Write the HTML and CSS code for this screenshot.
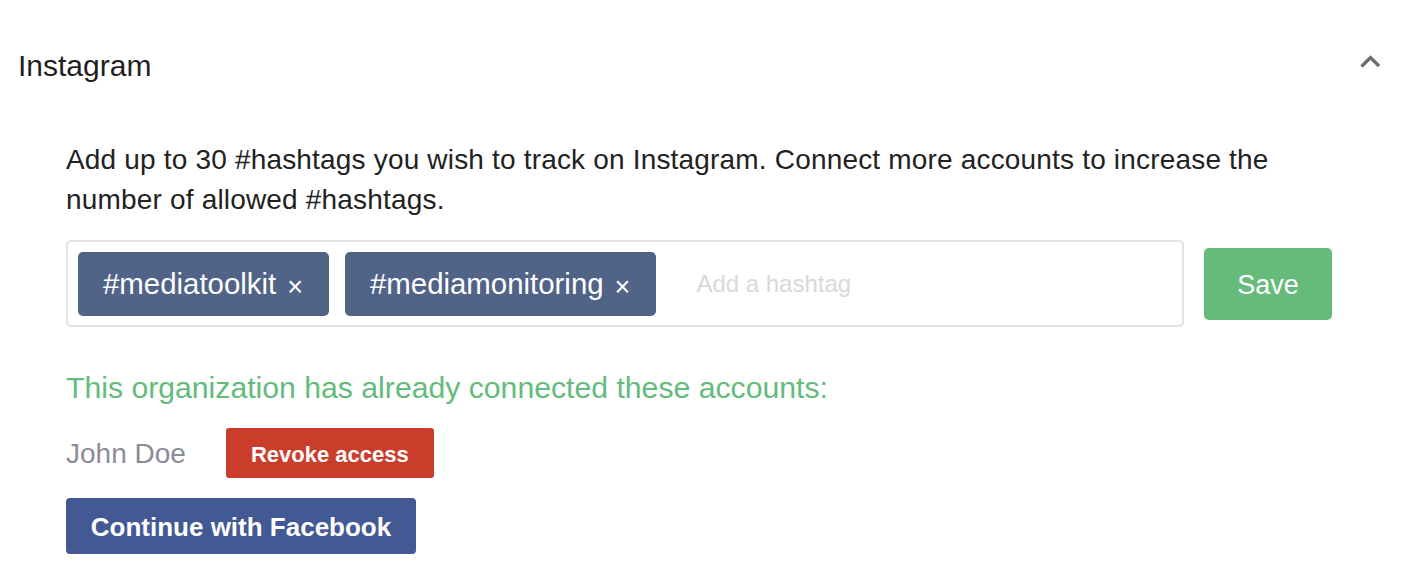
FILE: index.html
```html
<!DOCTYPE html>
<html>
<head>
<meta charset="utf-8">
<link rel="stylesheet" href="styles.css">
</head>
<body>
<section class="panel">
  <header class="panel-head">
    <h2 class="panel-title">Instagram</h2>
    <svg class="chevron" width="24" height="14" viewBox="0 0 24 14"><path d="M2.5 11.5 L11.5 2.5 L20 11" fill="none" stroke="#6b6b6b" stroke-width="3.2"/></svg>
  </header>
  <div class="panel-body">
    <p class="intro">Add up to 30 #hashtags you wish to track on Instagram. Connect more accounts to increase the number of allowed #hashtags.</p>
    <div class="tag-row">
      <div class="tag-input">
        <span class="tag">#mediatoolkit<span class="tag-x">×</span></span>
        <span class="tag">#mediamonitoring<span class="tag-x">×</span></span>
        <span class="placeholder">Add a hashtag</span>
      </div>
      <button class="btn-save">Save</button>
    </div>
    <p class="connected">This organization has already connected these accounts:</p>
    <div class="account">
      <span class="account-name">John Doe</span>
      <button class="btn-revoke">Revoke access</button>
    </div>
    <button class="btn-fb">Continue with Facebook</button>
  </div>
</section>
</body>
</html>
```
FILE: styles.css
```css
html, body {
  margin: 0;
  padding: 0;
  background: #ffffff;
}
body {
  font-family: "Liberation Sans", Arial, sans-serif;
  color: #222222;
}
.panel {
  width: 1406px;
  height: 586px;
  box-sizing: border-box;
}
.panel-head {
  display: flex;
  align-items: center;
  justify-content: space-between;
  padding: 46px 23px 0 18px;
  height: 40px;
}
.panel-title {
  margin: 0;
  font-weight: normal;
  font-size: 30px;
  line-height: 40px;
  color: #1f1f1f;
}
.chevron {
  display: block;
  margin-top: -9px;
}
.panel-body {
  padding: 0 0 0 66px;
}
.intro {
  margin: 54px 0 0 0;
  width: 1266px;
  font-size: 28px;
  line-height: 40px;
  letter-spacing: 0.18px;
  color: #222222;
}
.tag-row {
  display: flex;
  align-items: center;
  margin-top: 20px;
}
.tag-input {
  width: 1118px;
  height: 87px;
  box-sizing: border-box;
  border: 2px solid #e2e2e2;
  border-radius: 5px;
  padding: 10px 10px 9px 10px;
  display: flex;
  align-items: center;
  gap: 16px;
}
.tag {
  display: flex;
  align-items: center;
  height: 64px;
  box-sizing: border-box;
  padding: 0 26px 0 25px;
  background: #516387;
  border-radius: 5px;
  color: #ffffff;
  font-size: 29.4px;
  white-space: nowrap;
}
.tag-x {
  font-size: 27px;
  margin-left: 11px;
  margin-top: 7px;
}
.placeholder {
  margin-left: 24px;
  font-size: 24px;
  color: #d9d9d9;
}
.btn-save {
  margin-left: 20px;
  width: 128px;
  height: 72px;
  border: none;
  border-radius: 5px;
  background: #66bb7b;
  color: #ffffff;
  font-family: "Liberation Sans", Arial, sans-serif;
  font-size: 27px;
  padding: 4px 0 0 0;
}
.connected {
  margin: 41px 0 0 0;
  font-size: 30.2px;
  line-height: 40px;
  color: #63bb7c;
}
.account {
  display: flex;
  align-items: center;
  margin-top: 20px;
  height: 50px;
}
.account-name {
  font-size: 28px;
  color: #8a8c96;
  padding-top: 2px;
}
.btn-revoke {
  margin-left: 40px;
  width: 208px;
  height: 50px;
  border: none;
  border-radius: 3px;
  background: #cb3d2b;
  color: #ffffff;
  font-family: "Liberation Sans", Arial, sans-serif;
  font-weight: bold;
  font-size: 22px;
  padding: 3px 0 0 0;
}
.btn-fb {
  display: block;
  margin-top: 20px;
  width: 350px;
  height: 56px;
  border: none;
  border-radius: 4px;
  background: #425994;
  color: #ffffff;
  font-family: "Liberation Sans", Arial, sans-serif;
  font-weight: bold;
  font-size: 26px;
  padding: 2px 0 0 0;
}
```
